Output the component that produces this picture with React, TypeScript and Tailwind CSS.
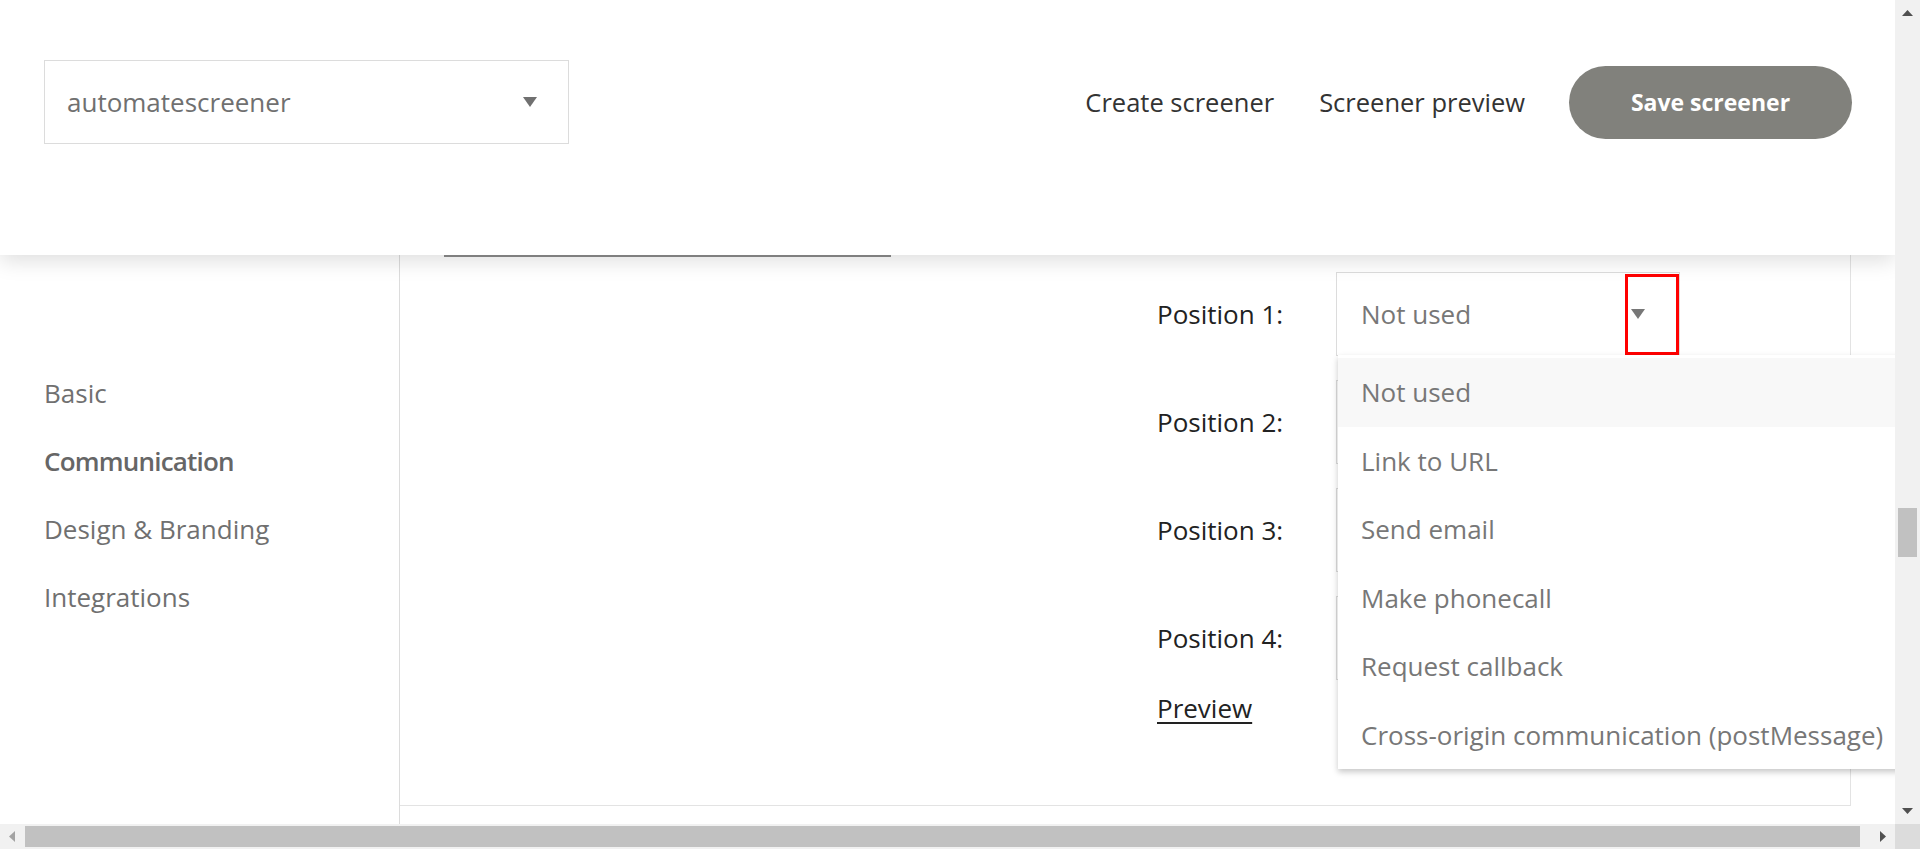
import React from "react";

const options = [
  "Not used",
  "Link to URL",
  "Send email",
  "Make phonecall",
  "Request callback",
  "Cross-origin communication (postMessage)",
];

const sections = ["Basic", "Communication", "Design & Branding", "Integrations"];

function Caret({ className }: { className?: string }) {
  return (
    <svg className={className} width="14" height="10" viewBox="0 0 14 10">
      <path d="M0 0h14L7 10z" fill="currentColor" />
    </svg>
  );
}

function Arrow({ dir, className }: { dir: "up" | "down" | "left" | "right"; className?: string }) {
  const d = {
    up: "M0 6h11L5.5 0z",
    down: "M0 0h11L5.5 6z",
    left: "M6 0v11L0 5.5z",
    right: "M0 0v11l6-5.5z",
  }[dir];
  const vertical = dir === "up" || dir === "down";
  return (
    <svg className={className} width={vertical ? 11 : 6} height={vertical ? 6 : 11} viewBox={vertical ? "0 0 11 6" : "0 0 6 11"}>
      <path d={d} fill="currentColor" />
    </svg>
  );
}

function PositionRow({ index, open }: { index: number; open?: boolean }) {
  return (
    <div className="flex items-center pl-[757px]">
      <span className="w-[179px] text-[26px] leading-[36px] text-[#222]">Position {index}:</span>
      <div className="relative flex h-[84px] w-[344px] items-center justify-between border border-[#dcdcdc] bg-white pl-[24px] pr-[34px]">
        {/* rows 2-4 sit under the open menu, so only the first shows its value */}
        <span className="text-[26px] leading-[36px] text-[#777]">{open ? "Not used" : ""}</span>
        <Caret className="text-[#777]" />
        {open && (
          <>
            {/* highlight box from the bug report */}
            <div className="absolute top-[1px] right-0 h-[81px] w-[54px] border-[3px] border-[#ff0000]" />
            <ul className="absolute top-full left-[1px] z-10 w-[620px] bg-white pt-[3px] shadow-[0_3px_6px_rgba(0,0,0,0.22)]">
              {options.map((o, i) => (
                <li
                  key={o}
                  className={`flex h-[68.5px] items-center pl-[23px] text-[26px] leading-[36px] whitespace-nowrap text-[#777] ${i === 0 ? "bg-[#f8f8f8]" : ""}`}
                >
                  {o}
                </li>
              ))}
            </ul>
          </>
        )}
      </div>
    </div>
  );
}

export default function App() {
  return (
    <div className="flex h-[849px] w-[1920px] flex-col overflow-hidden bg-white font-['Open_Sans',sans-serif]">
      <div className="flex h-[824px]">
        <div className="flex w-[1895px] flex-col overflow-hidden">
          <header className="relative z-20 flex h-[255px] shrink-0 items-start bg-white pt-[60px] shadow-[0_6px_20px_rgba(0,0,0,0.13)]">
            <div className="ml-[44px] flex h-[84px] w-[525px] items-center justify-between border border-[#dcdcdc] pr-[31px] pl-[22px]">
              <span className="text-[26px] text-[#707070]">automatescreener</span>
              <Caret className="text-[#707070]" />
            </div>
            <nav className="ml-auto flex h-[84px] items-center text-[25.5px] text-[#333]">
              <a className="mr-[45px]">Create screener</a>
              <a className="mr-[44px]">Screener preview</a>
              <button className="mr-[43px] h-[73px] w-[283px] rounded-full bg-[#81817c] text-[23px] font-bold text-white">
                Save screener
              </button>
            </nav>
          </header>

          <div className="flex flex-1">
            <aside className="flex w-[400px] flex-col border-r border-[#dcdcdc] pt-[104px] pl-[44px]">
              {sections.map((s) => (
                <a
                  key={s}
                  className={`flex h-[68px] items-center text-[26px] ${s === "Communication" ? "font-semibold tracking-[-0.8px] text-[#666]" : "text-[#707070]"}`}
                >
                  {s}
                </a>
              ))}
            </aside>

            <main className="flex h-[551px] w-[1451px] flex-col border-r border-b border-[#e3e3e3]">
              <div className="ml-[44px] h-[2px] w-[447px] bg-[#8c8c8c]" />
              <div className="mt-[15px] flex flex-col gap-[24px]">
                <PositionRow index={1} open />
                <PositionRow index={2} />
                <PositionRow index={3} />
                <PositionRow index={4} />
              </div>
              <div className="mt-[9px] pl-[757px]">
                <a className="text-[26px] leading-[38px] text-[#222] underline underline-offset-4">Preview</a>
              </div>
            </main>
          </div>
        </div>

        {/* vertical scrollbar */}
        <div className="flex w-[25px] flex-col bg-[#f1f1f1]">
          <div className="flex h-[25px] items-start justify-center pt-[10px]">
            <Arrow dir="up" className="text-[#505050]" />
          </div>
          <div className="mx-[3px] mt-[483px] h-[49px] bg-[#c1c1c1]" />
          <div className="flex-1" />
          <div className="flex h-[25px] items-start justify-center pt-[9px]">
            <Arrow dir="down" className="text-[#505050]" />
          </div>
        </div>
      </div>

      {/* horizontal scrollbar */}
      <div className="flex h-[25px] bg-[#f1f1f1]">
        <div className="flex w-[25px] items-center justify-start pl-[9px]">
          <Arrow dir="left" className="text-[#a3a3a3]" />
        </div>
        <div className="my-[2px] w-[1835px] bg-[#c1c1c1]" />
        <div className="flex-1" />
        <div className="flex w-[25px] items-center pl-[10px]">
          <Arrow dir="right" className="text-[#505050]" />
        </div>
        <div className="w-[25px] bg-[#dcdcdc]" />
      </div>
    </div>
  );
}
